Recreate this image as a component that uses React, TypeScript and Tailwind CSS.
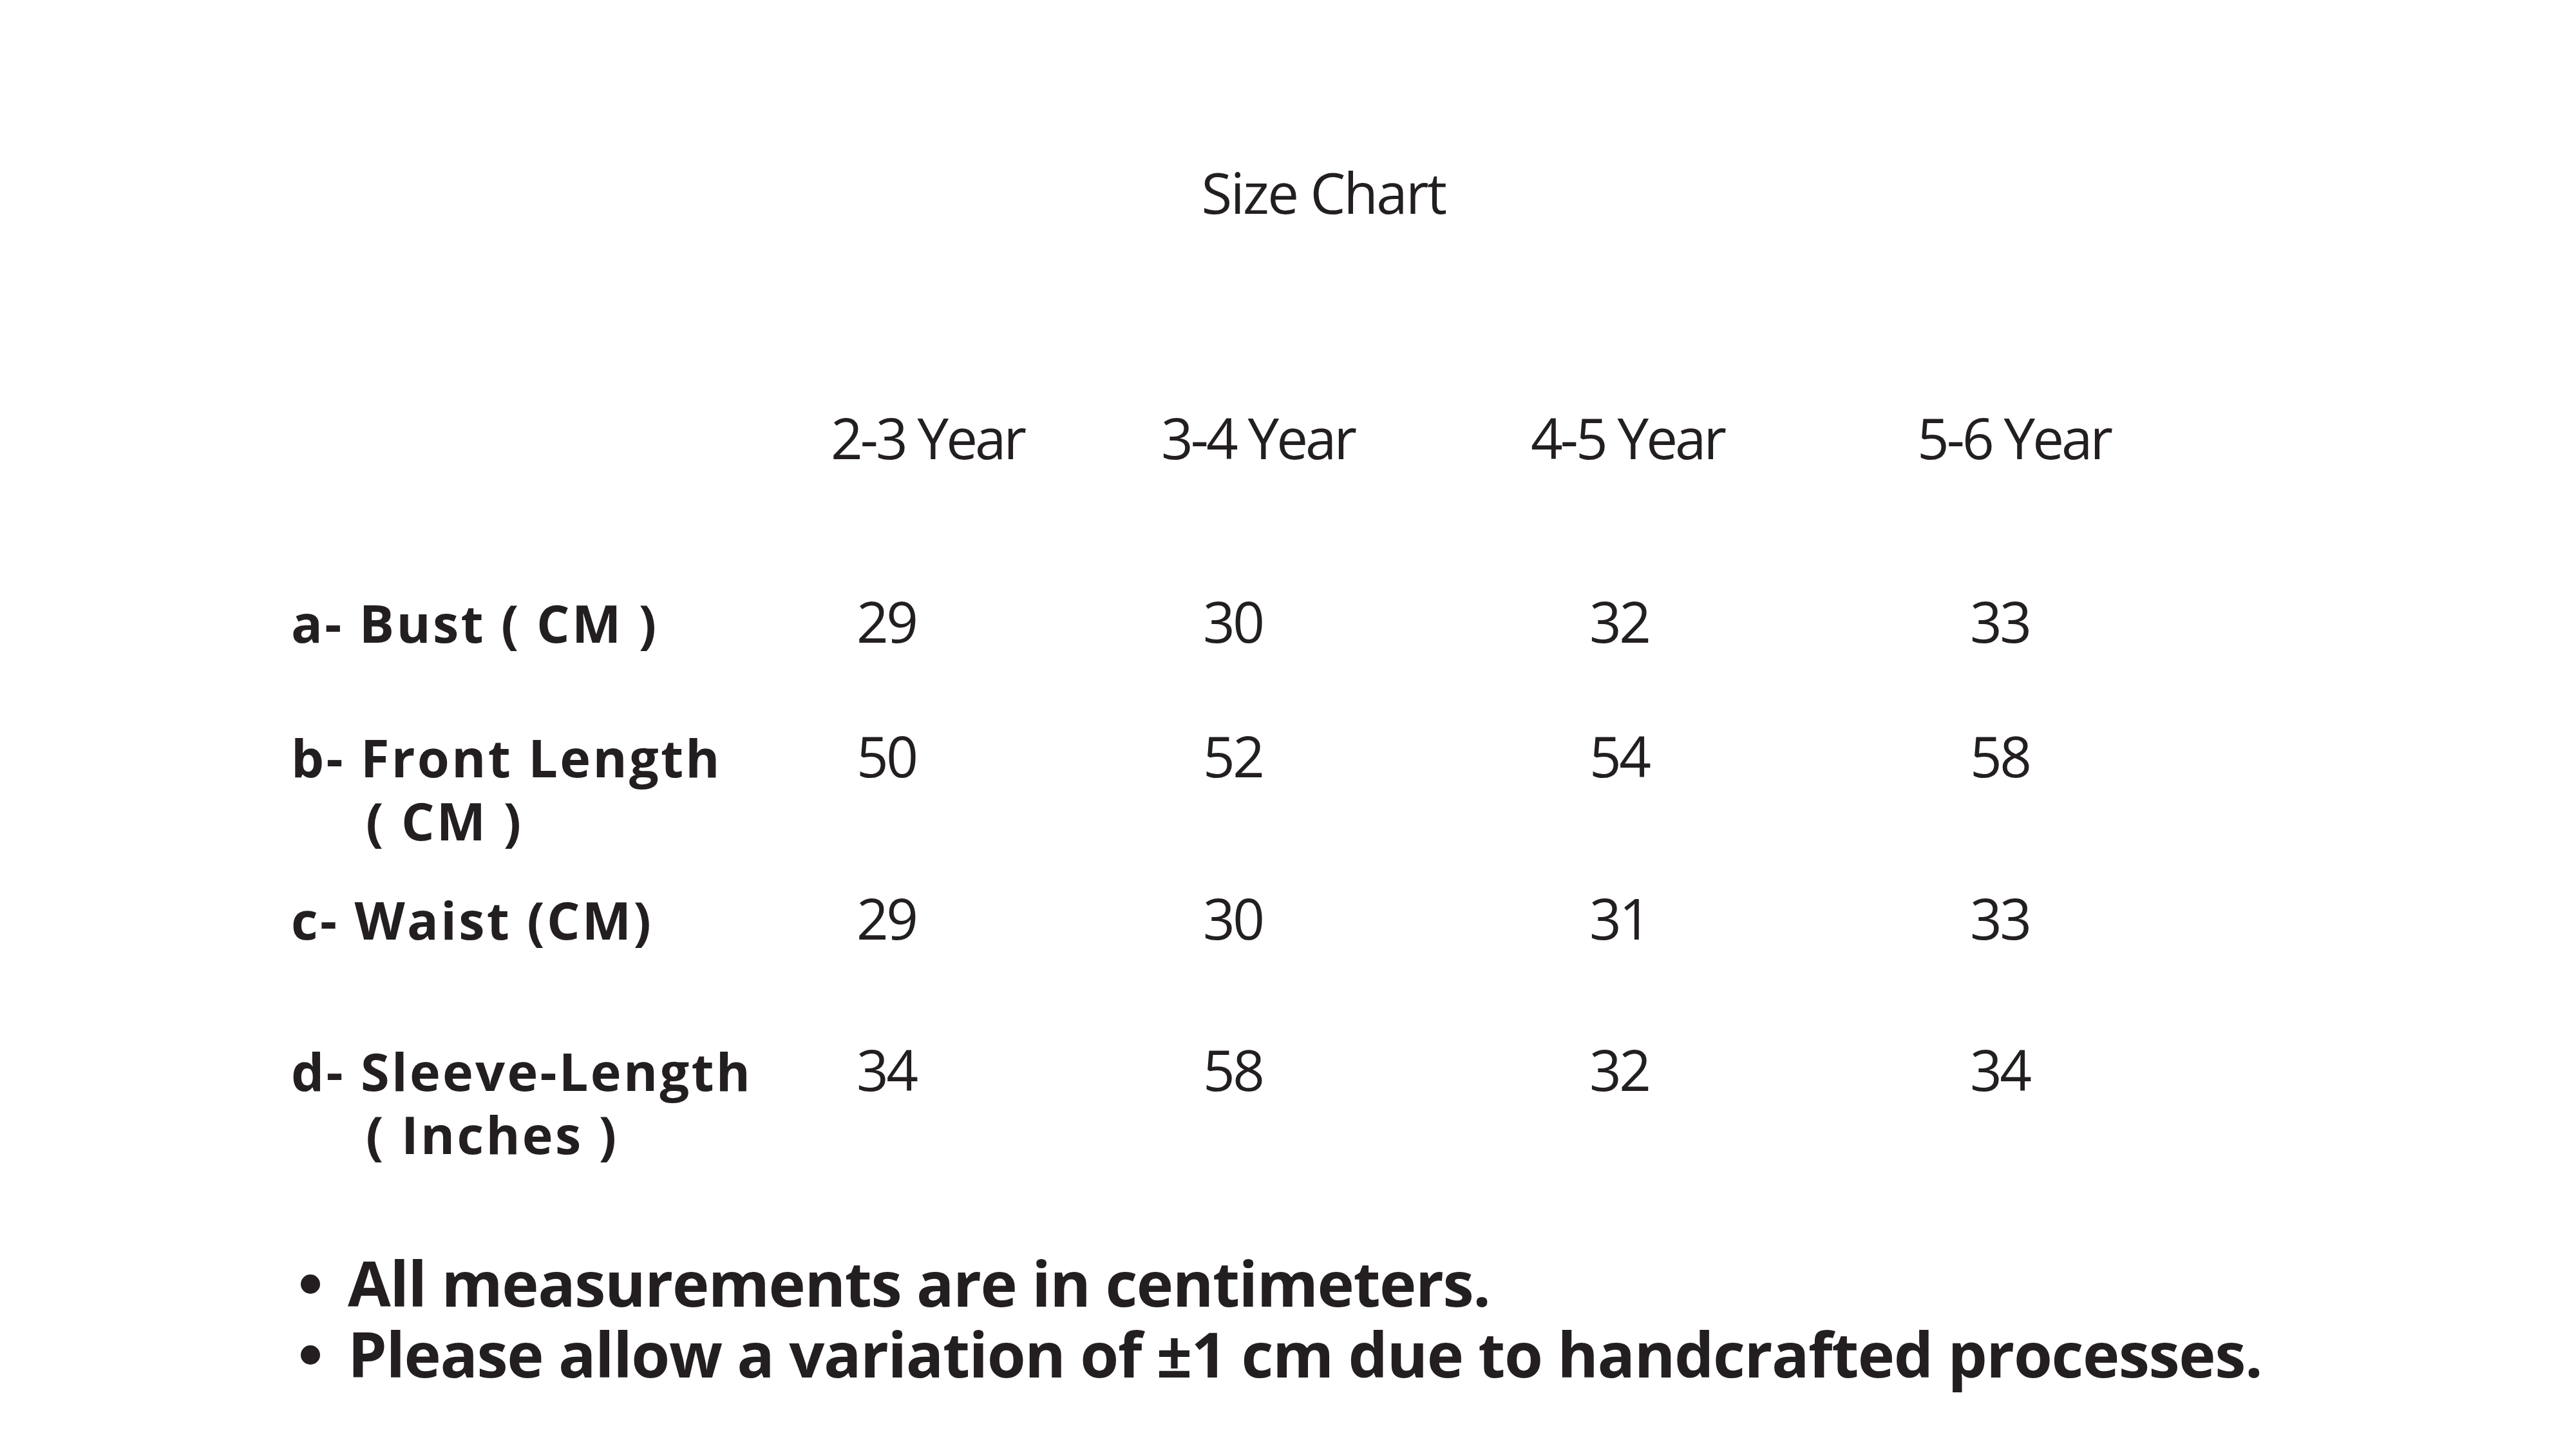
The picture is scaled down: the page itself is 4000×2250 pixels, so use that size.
const headers = ['2-3 Year', '3-4 Year', '4-5 Year', '5-6 Year'];

const rows = [
  { label: 'a- Bust ( CM )', sub: '', values: ['29', '30', '32', '33'], mt: 'mt-[192px]' },
  { label: 'b- Front Length', sub: '( CM )', values: ['50', '52', '54', '58'], mt: 'mt-[108px]' },
  { label: 'c- Waist (CM)', sub: '', values: ['29', '30', '31', '33'], mt: 'mt-[53px]' },
  { label: 'd- Sleeve-Length', sub: '( Inches )', values: ['34', '58', '32', '34'], mt: 'mt-[134px]' },
];

const valueOffsets = ['pl-[37px]', 'pl-[62px]', 'pl-[88px]', 'pl-[79px]'];

const gridCols = 'grid grid-cols-[841px_513px_574px_600px_400px]';

export default function App() {
  return (
    <div className="w-[4000px] h-[2250px] bg-white text-[#231f20] overflow-hidden">
      <div className="pt-[255px] pl-[452px]">
        {/* Title */}
        <h1 className="w-[3206px] text-center font-['Open_Sans',sans-serif] text-[87px] leading-[87px] tracking-[-0.03em] font-normal">
          Size Chart
        </h1>

        {/* Header row */}
        <div className={`${gridCols} mt-[294px] font-['Open_Sans',sans-serif] text-[87px] leading-[87px] tracking-[-0.045em]`}>
          <div />
          {headers.map((h) => (
            <div key={h} className="-ml-[3px]">
              {h}
            </div>
          ))}
        </div>

        {/* Measurement rows */}
        {rows.map((row) => (
          <div key={row.label} className={`${gridCols} items-baseline ${row.mt}`}>
            <div className="font-['Open_Sans',sans-serif] font-bold text-[81px] leading-[98px] tracking-[0.04em]">
              <div>{row.label}</div>
              {row.sub && <div className="pl-[116px]">{row.sub}</div>}
            </div>
            {row.values.map((v, i) => (
              <div
                key={i}
                className={`${valueOffsets[i]} font-['Open_Sans',sans-serif] text-[87px] leading-[98px] tracking-[-0.04em]`}
              >
                {v}
              </div>
            ))}
          </div>
        ))}

        {/* Notes */}
        <ul className="mt-[126px] font-['Open_Sans',sans-serif] font-bold text-[97px] leading-[110px] tracking-[-0.015em]">
          {['All measurements are in centimeters.', 'Please allow a variation of ±1 cm due to handcrafted processes.'].map((t) => (
            <li key={t} className="flex items-start">
              <span className="mt-[43px] ml-[15px] w-[30px] h-[30px] rounded-full bg-[#231f20] shrink-0" />
              <span className="ml-[43px]">{t}</span>
            </li>
          ))}
        </ul>
      </div>
    </div>
  );
}
